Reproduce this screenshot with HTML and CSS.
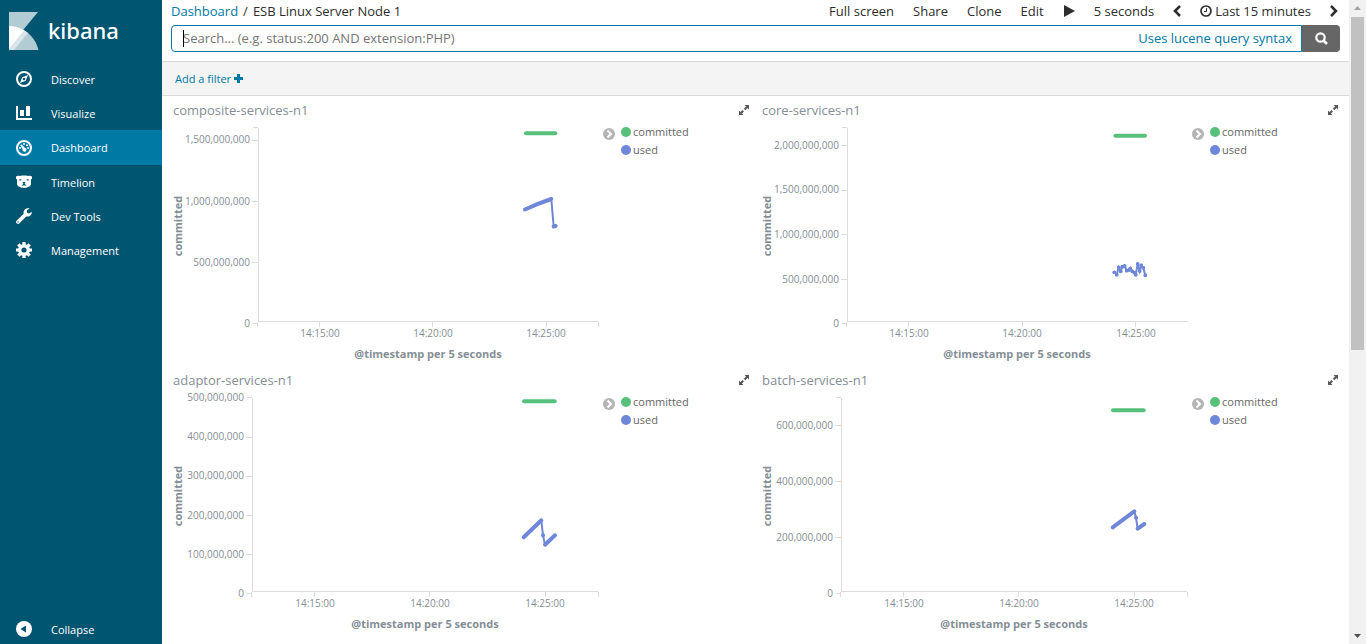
FILE: index.html
```html
<!DOCTYPE html>
<html lang="en">
<head>
<meta charset="utf-8">
<meta name="viewport" content="width=device-width, initial-scale=1">
<title>ESB Linux Server Node 1 - Kibana</title>
<link rel="stylesheet" href="styles.css">
</head>
<body>
<div class="app">
  <aside class="sidebar">
    <a class="brand" href="#">
      <svg class="brand-mark" viewBox="0 0 30 38" aria-hidden="true">
        <path d="M0 0h29L0 35z" fill="#b2ccd4"/>
        <path d="M0 14C14 14 26 24 29.500 38H0z" fill="#b2ccd4"/>
        <path d="M0 14c6 0 11 1.500 15.500 4.500L0 37z" fill="#fff"/>
        <path d="M15.500 18.500L19 21 5 38H0v-1z" fill="#d9e5e9"/>
      </svg>
      <span class="brand-name">kibana</span>
    </a>
    <nav class="nav">
      <a class="nav-item" href="#">
        <svg class="nav-icon" viewBox="0 0 16 16" aria-hidden="true"><circle cx="8" cy="8" r="7" fill="none" stroke="#fff" stroke-width="2"/><path d="M12 4L9.800 9.800 4 12l2.200-5.800z" fill="#fff"/><circle cx="8" cy="8" r="1.300" fill="#005571"/></svg>
        <span>Discover</span>
      </a>
      <a class="nav-item" href="#">
        <svg class="nav-icon" viewBox="0 0 16 16" aria-hidden="true"><path d="M0 1h2v12h14v2H0zM4 5h4v6H4zM10 1h4v10h-4z" fill="#fff"/></svg>
        <span>Visualize</span>
      </a>
      <a class="nav-item nav-item-active" href="#">
        <svg class="nav-icon" viewBox="0 0 16 16" aria-hidden="true"><circle cx="8" cy="8" r="7" fill="none" stroke="#fff" stroke-width="2"/><path d="M4.300 5.200l1-.9 3.500 3.400a2 2 0 1 1-2.200 1.500z" fill="#fff"/><circle cx="8" cy="4" r="1" fill="#fff"/><circle cx="11" cy="5.300" r="1" fill="#fff"/><circle cx="12" cy="8" r="1" fill="#fff"/><circle cx="4" cy="8" r="1" fill="#fff"/></svg>
        <span>Dashboard</span>
      </a>
      <a class="nav-item" href="#">
        <svg class="nav-icon" viewBox="0 0 16 16" aria-hidden="true"><path d="M0 2.500C1 1.500 3 1.500 4 2c2-.6 6-.6 8 0 1-.5 3-.5 4 .5v2.300l-1 .8v4c0 2.500-1.500 3.200-3.500 3.700-1 .8-6 .8-7 0C2.500 12.800 1 12.100 1 9.600v-4l-1-.8z" fill="#fff"/><path d="M3.500 5l2 .5-.3 1.300-1.700-.5zM12.500 5l-2 .5.3 1.300 1.700-.5zM6.500 8h3L8.600 9.800l1.900 1.700H5.500l1.900-1.700z" fill="#005571"/></svg>
        <span>Timelion</span>
      </a>
      <a class="nav-item" href="#">
        <svg class="nav-icon" viewBox="0 0 16 16" aria-hidden="true"><path d="M15.700 3.900l-2.800 1.700-2-1.100V2.200L13.600.5C12.500-.1 10.200 0 8.800 1.400 7.600 2.600 7.300 4.200 7.700 5.800L.7 12.500a1.900 1.900 0 0 0 2.800 2.800l6.700-6.900c1.700.5 3.300 0 4.500-1.100 1-1 1.300-2.300 1-3.400zM2 14.700a.7.700 0 1 1 0-1.400.7.700 0 0 1 0 1.400z" fill="#fff"/></svg>
        <span>Dev Tools</span>
      </a>
      <a class="nav-item" href="#">
        <svg class="nav-icon" viewBox="0 0 16 16" aria-hidden="true"><circle cx="8" cy="8" r="4.300" fill="none" stroke="#fff" stroke-width="3.400"/><path d="M8 0v3M8 13v3M0 8h3M13 8h3M2.300 2.300l2.200 2.200M11.500 11.500l2.200 2.200M2.300 13.700l2.200-2.200M11.500 4.500l2.200-2.200" stroke="#fff" stroke-width="3.200"/></svg>
        <span>Management</span>
      </a>
    </nav>
    <button class="nav-item collapse" type="button">
      <svg class="nav-icon" viewBox="0 0 16 16" aria-hidden="true"><circle cx="8" cy="8" r="8" fill="#fff"/><path d="M10 4.500v7L4.500 8z" fill="#005571"/></svg>
      <span>Collapse</span>
    </button>
  </aside>

  <main class="main">
    <header class="header">
      <div class="topbar">
        <div class="crumbs"><a href="#">Dashboard</a><span>/</span><span class="crumb-current">ESB Linux Server Node 1</span></div>
        <div class="menu">
          <button type="button">Full screen</button>
          <button type="button">Share</button>
          <button type="button">Clone</button>
          <button type="button">Edit</button>
          <button type="button" aria-label="Start refresh"><svg width="12" height="12" viewBox="0 0 12 12"><path d="M1 0l11 6-11 6z" fill="#2d2d2d"/></svg></button>
          <button type="button">5 seconds</button>
          <button type="button" aria-label="Earlier"><svg width="8" height="12" viewBox="0 0 8 12"><path d="M7 1L2 6l5 5" fill="none" stroke="#2d2d2d" stroke-width="2.500"/></svg></button>
          <button type="button"><svg class="clock" width="12" height="12" viewBox="0 0 12 12"><circle cx="6" cy="6" r="5" fill="none" stroke="#2d2d2d" stroke-width="1.700"/><path d="M6.500 3v3.500H4" fill="none" stroke="#2d2d2d"/></svg>Last 15 minutes</button>
          <button type="button" aria-label="Later"><svg width="8" height="12" viewBox="0 0 8 12"><path d="M1 1l5 5-5 5" fill="none" stroke="#2d2d2d" stroke-width="2.500"/></svg></button>
        </div>
      </div>
      <form class="search">
        <div class="search-box">
          <input type="text" aria-label="Search" placeholder="Search... (e.g. status:200 AND extension:PHP)">
          <span class="caret"></span>
          <a href="#">Uses lucene query syntax</a>
        </div>
        <button class="search-button" type="submit" aria-label="Search"><svg width="13" height="13" viewBox="0 0 13 13"><circle cx="5.500" cy="5.500" r="4.200" fill="none" stroke="#fff" stroke-width="2.200"/><path d="M8.500 8.500l3.500 3.500" stroke="#fff" stroke-width="2.600"/></svg></button>
      </form>
    </header>
    <div class="filters">
      <a href="#">Add a filter <svg width="9" height="9" viewBox="0 0 9 9" aria-hidden="true"><path d="M3 0h3v3h3v3H6v3H3V6H0V3h3z" fill="#0079a5"/></svg></a>
    </div>

    <div class="grid">
      <section class="panel">
        <div class="panel-head"><h2>composite-services-n1</h2><button type="button" aria-label="Expand"><svg width="10" height="10" viewBox="0 0 10 10"><path d="M5.500 0H10v4.500L8.500 3 6.300 5.200 4.800 3.700 7 1.500zM0 5.500L1.500 7l2-2L5 6.500l-2 2L4.500 10H0z" fill="#5a5a5a"/></svg></button></div>
        <div class="panel-body">
          <svg class="chart" viewBox="0 0 428 240" role="img" aria-label="composite-services-n1">
            <path class="axis" d="M80 5.500h5M85.500 6v194M79 18.500h6M79 79.500h6M79 140.500h6M80 201.500h5M84.500 200v5M85 199.500h340M146.500 200v5M259.500 200v5M373.500 200v5M425.500 200v5"/>
            <g class="tick tick-y"><text x="77" y="21">1,500,000,000</text><text x="77" y="83">1,000,000,000</text><text x="77" y="144">500,000,000</text><text x="77" y="205">0</text></g>
            <g class="tick tick-x"><text x="147" y="215">14:15:00</text><text x="260" y="215">14:20:00</text><text x="373" y="215">14:25:00</text></g>
            <text class="axis-title" transform="translate(9 104) rotate(-90)">committed</text>
            <text class="axis-title" x="255" y="236">@timestamp per 5 seconds</text>
            <path class="dense committed" d="M353 11.300H382.300"/>
            <path class="line used" d="M378.300 77L380.700 104.700"/>
            <path class="dense used" d="M352 87.500L363.700 82.300 378.300 77M380.700 104.500L382.700 104"/>
          </svg>
          <div class="legend">
            <button type="button" aria-label="Toggle legend"><svg width="12" height="12" viewBox="0 0 12 12"><circle cx="6" cy="6" r="6" fill="#b4b4b4"/><path d="M4.500 2.500L8 6 4.500 9.500" fill="none" stroke="#fff" stroke-width="2"/></svg></button>
            <ul><li><i class="dot dot-green"></i>committed</li><li><i class="dot dot-blue"></i>used</li></ul>
          </div>
        </div>
      </section>

      <section class="panel">
        <div class="panel-head"><h2>core-services-n1</h2><button type="button" aria-label="Expand"><svg width="10" height="10" viewBox="0 0 10 10"><path d="M5.500 0H10v4.500L8.500 3 6.300 5.200 4.800 3.700 7 1.500zM0 5.500L1.500 7l2-2L5 6.500l-2 2L4.500 10H0z" fill="#5a5a5a"/></svg></button></div>
        <div class="panel-body">
          <svg class="chart" viewBox="0 0 428 240" role="img" aria-label="core-services-n1">
            <defs><marker id="point" markerUnits="userSpaceOnUse" markerWidth="4" markerHeight="4" refX="2" refY="2"><circle cx="2" cy="2" r="1.900" fill="#6f87d8"/></marker></defs>
            <path class="axis" d="M80 5.500h5M85.500 6v194M79 23.500h6M79 68.500h6M79 112.500h6M79 157.500h6M80 201.500h5M84.500 200v5M85 199.500h341M146.500 200v5M260.500 200v5M373.500 200v5"/>
            <g class="tick tick-y"><text x="77" y="27">2,000,000,000</text><text x="77" y="71">1,500,000,000</text><text x="77" y="116">1,000,000,000</text><text x="77" y="161">500,000,000</text><text x="77" y="205">0</text></g>
            <g class="tick tick-x"><text x="147" y="215">14:15:00</text><text x="260" y="215">14:20:00</text><text x="374" y="215">14:25:00</text></g>
            <text class="axis-title" transform="translate(9 104) rotate(-90)">committed</text>
            <text class="axis-title" x="255" y="236">@timestamp per 5 seconds</text>
            <path class="dense committed" d="M353.500 13.700H383"/>
            <path class="line used points" d="M352.300 150.300L354.700 152.700 356.700 145.300 358.700 149.300 360.300 144.700 362.700 144 364.700 148.700 367 148 368.300 146.300 370.300 149.300 372.300 150.700 373.700 152.700 375.700 142 377.700 149 379.300 143.300 381.300 145.700 383.300 153.300"/>
          </svg>
          <div class="legend">
            <button type="button" aria-label="Toggle legend"><svg width="12" height="12" viewBox="0 0 12 12"><circle cx="6" cy="6" r="6" fill="#b4b4b4"/><path d="M4.500 2.500L8 6 4.500 9.500" fill="none" stroke="#fff" stroke-width="2"/></svg></button>
            <ul><li><i class="dot dot-green"></i>committed</li><li><i class="dot dot-blue"></i>used</li></ul>
          </div>
        </div>
      </section>

      <section class="panel">
        <div class="panel-head"><h2>adaptor-services-n1</h2><button type="button" aria-label="Expand"><svg width="10" height="10" viewBox="0 0 10 10"><path d="M5.500 0H10v4.500L8.500 3 6.300 5.200 4.800 3.700 7 1.500zM0 5.500L1.500 7l2-2L5 6.500l-2 2L4.500 10H0z" fill="#5a5a5a"/></svg></button></div>
        <div class="panel-body">
          <svg class="chart" viewBox="0 0 428 240" role="img" aria-label="adaptor-services-n1">
            <path class="axis" d="M74 5.500h5M79.500 6v194M73 45.500h6M73 84.500h6M73 123.500h6M73 162.500h6M74 201.500h5M78.500 200v5M79 199.500h346M141.500 200v5M256.500 200v5M372.500 200v5M425.500 200v5"/>
            <g class="tick tick-y"><text x="71" y="9">500,000,000</text><text x="71" y="48">400,000,000</text><text x="71" y="87">300,000,000</text><text x="71" y="127">200,000,000</text><text x="71" y="166">100,000,000</text><text x="71" y="205">0</text></g>
            <g class="tick tick-x"><text x="142" y="215">14:15:00</text><text x="257" y="215">14:20:00</text><text x="372" y="215">14:25:00</text></g>
            <text class="axis-title" transform="translate(9 104) rotate(-90)">committed</text>
            <text class="axis-title" x="252" y="236">@timestamp per 5 seconds</text>
            <path class="dense committed" d="M351 9.300H381.700"/>
            <path class="line used" d="M368.300 128.300L370 143.300 372 153"/>
            <path class="dense used" d="M350.700 145.300L368.300 128.300M370 143.300h.1M372 152.700L382 143.300"/>
          </svg>
          <div class="legend">
            <button type="button" aria-label="Toggle legend"><svg width="12" height="12" viewBox="0 0 12 12"><circle cx="6" cy="6" r="6" fill="#b4b4b4"/><path d="M4.500 2.500L8 6 4.500 9.500" fill="none" stroke="#fff" stroke-width="2"/></svg></button>
            <ul><li><i class="dot dot-green"></i>committed</li><li><i class="dot dot-blue"></i>used</li></ul>
          </div>
        </div>
      </section>

      <section class="panel">
        <div class="panel-head"><h2>batch-services-n1</h2><button type="button" aria-label="Expand"><svg width="10" height="10" viewBox="0 0 10 10"><path d="M5.500 0H10v4.500L8.500 3 6.300 5.200 4.800 3.700 7 1.500zM0 5.500L1.500 7l2-2L5 6.500l-2 2L4.500 10H0z" fill="#5a5a5a"/></svg></button></div>
        <div class="panel-body">
          <svg class="chart" viewBox="0 0 428 240" role="img" aria-label="batch-services-n1">
            <path class="axis" d="M74 5.500h5M79.500 6v194M73 33.500h6M73 89.500h6M73 145.500h6M74 201.500h5M78.500 200v5M79 199.500h346M141.500 200v5M256.500 200v5M372.500 200v5M425.500 200v5"/>
            <g class="tick tick-y"><text x="71" y="37">600,000,000</text><text x="71" y="93">400,000,000</text><text x="71" y="149">200,000,000</text><text x="71" y="205">0</text></g>
            <g class="tick tick-x"><text x="142" y="215">14:15:00</text><text x="257" y="215">14:20:00</text><text x="372" y="215">14:25:00</text></g>
            <text class="axis-title" transform="translate(9 104) rotate(-90)">committed</text>
            <text class="axis-title" x="252" y="236">@timestamp per 5 seconds</text>
            <path class="dense committed" d="M351 18.300H381.700"/>
            <path class="line used" d="M372.300 119L374 125.700 375.700 137"/>
            <path class="dense used" d="M350.700 135.300L372.300 119.300M374 125.700h.1M375.700 136.700L382.300 132"/>
          </svg>
          <div class="legend">
            <button type="button" aria-label="Toggle legend"><svg width="12" height="12" viewBox="0 0 12 12"><circle cx="6" cy="6" r="6" fill="#b4b4b4"/><path d="M4.500 2.500L8 6 4.500 9.500" fill="none" stroke="#fff" stroke-width="2"/></svg></button>
            <ul><li><i class="dot dot-green"></i>committed</li><li><i class="dot dot-blue"></i>used</li></ul>
          </div>
        </div>
      </section>
    </div>
  </main>

  <div class="scrollbar" aria-hidden="true">
    <svg width="17" height="17" viewBox="0 0 17 17"><path d="M5 10l3.500-4 3.500 4z" fill="#a3a3a3"/></svg>
    <div class="scroll-track"><div class="scroll-thumb"></div></div>
    <svg width="17" height="17" viewBox="0 0 17 17"><path d="M5 7h7l-3.500 4z" fill="#505050"/></svg>
  </div>
</div>
</body>
</html>
```

FILE: styles.css
```css
* {
  box-sizing: border-box;
}

body {
  margin: 0;
  background: #fff;
  color: #2d2d2d;
  font-family: "Open Sans", "Noto Sans", sans-serif;
  font-size: 13px;
}

a {
  color: #0079a5;
  text-decoration: none;
}

button {
  padding: 0;
  border: 0;
  background: none;
  color: inherit;
  font: inherit;
  cursor: pointer;
}

svg {
  flex: none;
}

.app {
  display: flex;
  height: 100vh;
  overflow: hidden;
}

/* Sidebar */
.sidebar {
  display: flex;
  flex: none;
  flex-direction: column;
  width: 162px;
  background: #005571;
}

.brand {
  display: flex;
  align-items: center;
  gap: 9px;
  height: 62px;
  padding-left: 9px;
  color: #fff;
}

.brand-mark {
  width: 30px;
  height: 38px;
}

.brand-name {
  padding-bottom: 2px;
  font-family: "Noto Sans", "Open Sans", sans-serif;
  font-size: 22px;
  font-weight: 500;
  line-height: 30px;
}

.nav {
  flex: 1;
}

.nav-item {
  display: flex;
  align-items: center;
  gap: 18px;
  width: 100%;
  height: 34px;
  padding-left: 16px;
  color: #fff;
  font-size: 11px;
}

.nav-item-active {
  height: 35px;
  background: #0079a5;
}

.nav-icon {
  width: 16px;
  height: 16px;
}

.nav-item span {
  margin-left: 1px;
}

.collapse {
  height: 30px;
}

/* Header */
.main {
  flex: 1;
  min-width: 0;
  overflow: hidden;
}

.header {
  height: 62px;
  padding: 0 9px;
  border-bottom: 1px solid #d9d9d9;
}

.topbar {
  display: flex;
  align-items: center;
  justify-content: space-between;
  height: 25px;
  padding: 0 2px 3px 0;
}

.crumbs {
  display: flex;
  gap: 5px;
}

.menu {
  display: flex;
  gap: 19px;
}

.menu button {
  display: flex;
  align-items: center;
  gap: 3px;
  white-space: nowrap;
}

.search {
  display: flex;
  height: 27px;
}

.search-box {
  position: relative;
  display: flex;
  flex: 1;
  align-items: center;
  padding: 0 9px 2px 11px;
  border: 1px solid #0079a5;
  border-radius: 4px 0 0 4px;
}

.search-box input {
  flex: 1;
  min-width: 0;
  padding: 0;
  border: 0;
  outline: 0;
  background: none;
  color: #2d2d2d;
  font: inherit;
}

.search-box input::placeholder {
  color: #757575;
}

.caret {
  position: absolute;
  top: 4px;
  left: 11px;
  width: 1px;
  height: 17px;
  background: #000;
}

.search-button {
  display: flex;
  align-items: center;
  justify-content: center;
  width: 38px;
  border-radius: 0 4px 4px 0;
  background: #666;
}

.filters {
  display: flex;
  align-items: center;
  height: 34px;
  padding-left: 13px;
  border-bottom: 1px solid #d9d9d9;
  background: #f4f4f4;
  font-size: 11px;
}

/* Panels */
.grid {
  display: grid;
  grid-template-columns: 1fr 1fr;
  padding: 0 5px 0 4px;
}

.panel {
  min-height: 270px;
  padding: 4px 6px 0 7px;
}

.panel-head {
  display: flex;
  align-items: center;
  justify-content: space-between;
  height: 22px;
  padding-bottom: 2px;
}

.panel-head h2 {
  margin: 0;
  color: #848e96;
  font-size: 13px;
  font-weight: 400;
}

.panel-head button,
.legend button {
  display: flex;
}

.panel-body {
  display: flex;
}

.chart {
  flex: 1;
  min-width: 0;
  overflow: visible;
}

.axis {
  fill: none;
  stroke: #ddd;
}

.tick {
  fill: #848e96;
  font-size: 10px;
}

.tick-y {
  text-anchor: end;
}

.tick-x {
  text-anchor: middle;
}

.axis-title {
  fill: #848e96;
  font-size: 11px;
  font-weight: 700;
  text-anchor: middle;
}

.line {
  fill: none;
  stroke-width: 2;
}

.dense {
  fill: none;
  stroke-linecap: round;
  stroke-linejoin: round;
  stroke-width: 4;
}

.committed {
  stroke: #57c17b;
}

.used {
  stroke: #6f87d8;
}

.points {
  marker: url(#point);
}

.legend {
  display: flex;
  flex: none;
  align-items: flex-start;
  gap: 6px;
  width: 148px;
  padding: 1px 0 0 2px;
}

.legend button {
  padding-top: 5px;
}

.legend ul {
  margin: 0;
  padding: 0;
  list-style: none;
}

.legend li {
  display: flex;
  align-items: center;
  gap: 2px;
  color: #666;
  font-size: 11px;
  line-height: 18px;
}

.dot {
  width: 10px;
  height: 10px;
  border-radius: 50%;
}

.dot-green {
  background: #57c17b;
}

.dot-blue {
  background: #6f87d8;
}

/* Scrollbar */
.scrollbar {
  display: flex;
  flex: none;
  flex-direction: column;
  width: 17px;
  background: #f1f1f1;
}

.scroll-track {
  flex: 1;
  padding: 0 2px;
}

.scroll-thumb {
  height: 333px;
  background: #c1c1c1;
}
```
